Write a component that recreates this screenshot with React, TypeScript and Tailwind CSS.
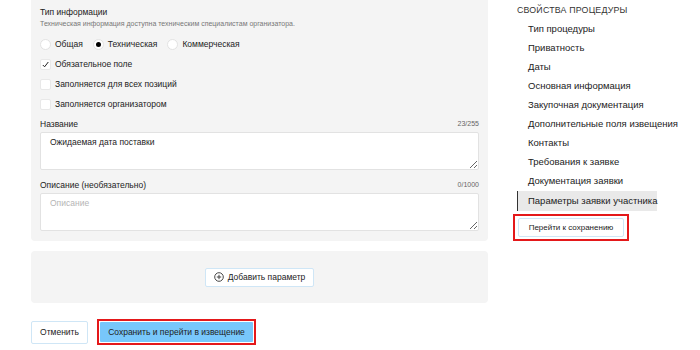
import React from "react";

const font = { fontFamily: '"Liberation Sans", Arial, sans-serif' };

function Radio({ checked, label }: { checked?: boolean; label: string }) {
  return (
    <label className="flex items-center gap-[4px]">
      <span className="w-[11px] h-[11px] rounded-full bg-white border border-[#e2e2e2] flex items-center justify-center">
        {checked && <span className="w-[5px] h-[5px] rounded-full bg-black" />}
      </span>
      <span>{label}</span>
    </label>
  );
}

function Check({ checked, label }: { checked?: boolean; label: string }) {
  return (
    <label className="flex items-center gap-[4px]">
      <span className="w-[11px] h-[11px] rounded-[2px] bg-white border border-[#e8e8e8] flex items-center justify-center">
        {checked && (
          <svg width="9" height="9" viewBox="0 0 9 9">
            <path d="M1.8 5 L3.6 6.8 L7.3 2" fill="none" stroke="#222" strokeWidth="1" />
          </svg>
        )}
      </span>
      <span>{label}</span>
    </label>
  );
}

const navItems = [
  "Тип процедуры",
  "Приватность",
  "Даты",
  "Основная информация",
  "Закупочная документация",
  "Дополнительные поля извещения",
  "Контакты",
  "Требования к заявке",
  "Документация заявки",
];

export default function App() {
  return (
    <div className="w-[700px] h-[350px] bg-white overflow-hidden flex text-[#222]" style={font}>
      <div className="w-[488px] shrink-0 pl-[31px] flex flex-col">
        <div className="shrink-0 bg-[#f4f4f4] rounded-b-[4px] px-[9px] pt-[6px] pb-[10px] flex flex-col">
          <div className="text-[8.5px] leading-[12px]">Тип информации</div>
          <div className="text-[7px] leading-[10px] text-[#777] mt-[1px]">
            Техническая информация доступна техническим специалистам организатора.
          </div>
          <div className="flex items-center gap-[10px] text-[8.5px] mt-[9px] h-[12px]">
            <Radio label="Общая" />
            <Radio checked label="Техническая" />
            <Radio label="Коммерческая" />
          </div>
          <div className="flex flex-col gap-[8px] text-[8.5px] mt-[8px]">
            <div className="h-[12px] flex items-center"><Check checked label="Обязательное поле" /></div>
            <div className="h-[12px] flex items-center"><Check label="Заполняется для всех позиций" /></div>
            <div className="h-[12px] flex items-center"><Check label="Заполняется организатором" /></div>
          </div>
          <div className="flex justify-between items-end mt-[8px] leading-[12px]">
            <span className="text-[8.5px]">Название</span>
            <span className="text-[7px] text-[#666]">23/255</span>
          </div>
          <textarea
            className="mt-[2px] h-[38px] w-full bg-white border border-[#e2e2e2] rounded-[2px] px-[9px] py-[3px] text-[8.5px] leading-[12px] outline-none resize-y"
            defaultValue="Ожидаемая дата поставки"
          />
          <div className="flex justify-between items-end mt-[9px] leading-[12px]">
            <span className="text-[8.5px]">Описание (необязательно)</span>
            <span className="text-[7px] text-[#666]">0/1000</span>
          </div>
          <textarea
            className="mt-[2px] h-[38px] w-full bg-white border border-[#e2e2e2] rounded-[2px] px-[9px] py-[3px] text-[8.5px] leading-[12px] outline-none resize-y placeholder:text-[#b5b5b5]"
            placeholder="Описание"
          />
        </div>
        <div className="shrink-0 mt-[10px] h-[52px] bg-[#f4f4f4] rounded-[4px] flex items-center justify-center">
          <button className="h-[19px] w-[109px] bg-white border border-[#cfe6f6] rounded-[2px] flex items-center justify-center gap-[4px] text-[8.5px]">
            <svg width="10" height="10" viewBox="0 0 10 10">
              <circle cx="5" cy="5" r="4.3" fill="none" stroke="#333" strokeWidth="0.9" />
              <path d="M5 2.8 V7.2 M2.8 5 H7.2" stroke="#333" strokeWidth="0.9" />
            </svg>
            Добавить параметр
          </button>
        </div>
        <div className="shrink-0 flex items-center mt-[16px] gap-[9px]">
          <button className="h-[23px] w-[57px] bg-white border border-[#cfe6f6] rounded-[2px] text-[8.5px]">
            Отменить
          </button>
          <div className="flex border-2 border-[#e4181a] p-[1px]">
            <button className="h-[20px] w-[153px] bg-[#78c7fb] rounded-[1px] text-[8.5px]">
              Сохранить и перейти в извещение
            </button>
          </div>
        </div>
      </div>
      <div className="flex-1 pl-[29px] pt-[4px] flex flex-col items-start">
        <div className="text-[8.8px] tracking-[0.2px] text-[#333] leading-[12px]">СВОЙСТВА ПРОЦЕДУРЫ</div>
        <div className="mt-[4px] flex flex-col w-[140px] text-[9.5px]">
          {navItems.map((n) => (
            <div key={n} className="h-[19px] flex items-center pl-[11px] whitespace-nowrap">{n}</div>
          ))}
          <div className="h-[20px] flex items-center pl-[10px] border-l border-[#333] bg-[#e9e9e9] whitespace-nowrap">
            Параметры заявки участника
          </div>
        </div>
        <div className="flex mt-[3px] -ml-[4px] border-2 border-[#e4181a] px-[3px] py-[2px]">
          <button className="h-[19px] w-[106px] bg-white border border-[#cfe6f6] rounded-[2px] text-[8px]">
            Перейти к сохранению
          </button>
        </div>
      </div>
    </div>
  );
}
